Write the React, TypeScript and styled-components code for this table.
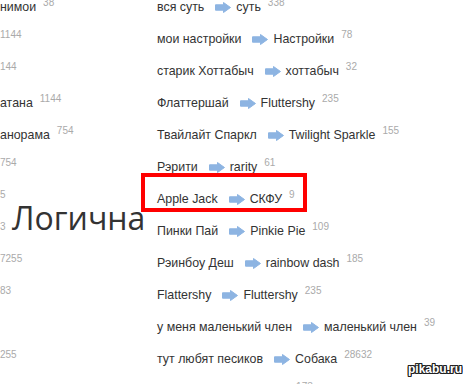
import React from 'react';
import styled, { createGlobalStyle } from 'styled-components';

const GlobalStyle = createGlobalStyle`
  html, body {
    margin: 0;
    padding: 0;
    background: #fff;
    overflow: hidden;
  }
  body {
    font-family: 'Liberation Sans', Arial, sans-serif;
  }
`;

const Page = styled.div`
  position: relative;
  width: 467px;
  height: 384px;
  overflow: hidden;
  display: flex;
  background: #fff;
`;

const Column = styled.div<{ $width?: number; $pad?: number }>`
  width: ${p => (p.$width ? p.$width + 'px' : 'auto')};
  flex: ${p => (p.$width ? 'none' : '1')};
  padding-left: ${p => p.$pad || 0}px;
  margin-top: -13px;
  overflow: hidden;
`;

const Row = styled.div<{ $marked?: boolean }>`
  position: relative;
  height: 32px;
  line-height: 32px;
  font-size: 12.4px;
  color: #333;
  white-space: nowrap;

  ${p =>
    p.$marked &&
    `
    &::before {
      content: '';
      position: absolute;
      top: -6px;
      left: -16px;
      width: 166px;
      height: 39px;
      box-sizing: border-box;
      border: 4px solid #ff0000;
    }
  `}
`;

const Count = styled.span<{ $flush?: boolean }>`
  font-size: 10px;
  color: #aaa;
  vertical-align: 5px;
  margin-left: ${p => (p.$flush ? 0 : 7)}px;
`;

const ArrowIcon = styled.svg`
  width: 16px;
  height: 11px;
  vertical-align: middle;
  margin: 0 5px 0 11px;
`;

const Heading = styled.div`
  position: absolute;
  left: 12px;
  top: 203px;
  font-family: 'Open Sans', sans-serif;
  font-size: 32px;
  line-height: 30px;
  color: #333;
`;

const Watermark = styled.div`
  position: absolute;
  right: 5px;
  bottom: 8px;
  font-family: 'Liberation Sans', Arial, sans-serif;
  font-weight: bold;
  font-size: 12px;
  color: #fff;
  text-shadow: -1px 0 #222, 1px 0 #222, 0 -1px #222, 0 1px #222, -1px -1px #222,
    1px 1px #222, -1px 1px #222, 1px -1px #222;
`;

const Arrow = () => (
  <ArrowIcon viewBox='0 0 16 11'>
    <path
      d='M0.5 2.8 H8.5 V0.5 L15.5 5.5 L8.5 10.5 V8.2 H0.5 Z'
      fill='#8db4e2'
      stroke='#8db4e2'
      strokeWidth='1'
      strokeLinejoin='round'
    />
  </ArrowIcon>
);

type Pair = { from: string; to: string; count: string; marked?: boolean };

const pairs: Pair[] = [
  { from: 'вся суть', to: 'суть', count: '338' },
  { from: 'мои настройки', to: 'Настройки', count: '78' },
  { from: 'старик Хоттабыч', to: 'хоттабыч', count: '32' },
  { from: 'Флаттершай', to: 'Fluttershy', count: '235' },
  { from: 'Твайлайт Спаркл', to: 'Twilight Sparkle', count: '155' },
  { from: 'Рэрити', to: 'rarity', count: '61' },
  { from: 'Apple Jack', to: 'СКФУ', count: '9', marked: true },
  { from: 'Пинки Пай', to: 'Pinkie Pie', count: '109' },
  { from: 'Рэинбоу Деш', to: 'rainbow dash', count: '185' },
  { from: 'Flattershy', to: 'Fluttershy', count: '235' },
  { from: 'у меня маленький член', to: 'маленький член', count: '39' },
  { from: 'тут любят песиков', to: 'Собака', count: '28632' },
  { from: 'моя рыбка', to: 'карась', count: '173' },
];

// left column is cut by the window edge, only the tails are visible
const leftTails: { text: string; count?: string }[] = [
  { text: 'нимои', count: '38' },
  { text: '', count: '1144' },
  { text: '', count: '144' },
  { text: 'атана', count: '1144' },
  { text: 'анорама', count: '754' },
  { text: '', count: '754' },
  { text: '', count: '5' },
  { text: '', count: '3' },
  { text: '', count: '7255' },
  { text: '', count: '83' },
  { text: '' },
  { text: '', count: '255' },
];

const App = () => {
  return (
    <Page>
      <GlobalStyle />
      <Column $width={140}>
        {leftTails.map((t, i) => (
          <Row key={i}>
            {t.text}
            {t.count && <Count $flush={!t.text}>{t.count}</Count>}
          </Row>
        ))}
      </Column>
      <Column $pad={17}>
        {pairs.map((p, i) => (
          <Row key={i} $marked={p.marked}>
            {p.from}
            <Arrow />
            {p.to}
            <Count>{p.count}</Count>
          </Row>
        ))}
      </Column>
      <Heading>Логична</Heading>
      <Watermark>pikabu.ru</Watermark>
    </Page>
  );
};

export default App;
